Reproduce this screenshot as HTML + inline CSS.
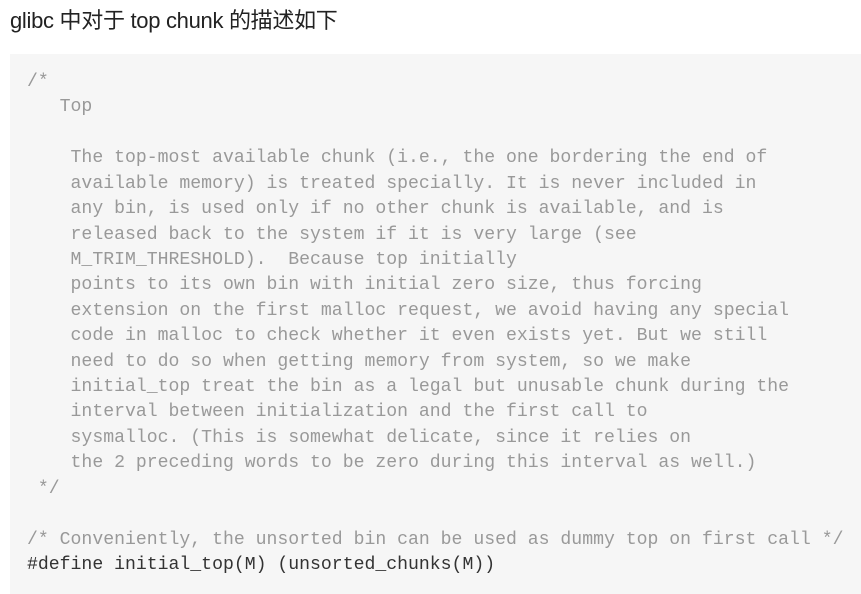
<!DOCTYPE html>
<html><head><meta charset="utf-8"><style>
body{margin:0;background:#fff;width:861px;height:583px;overflow:hidden;position:relative}
.t{position:absolute;left:10px;top:3px;font:22px "Liberation Sans","Noto Sans CJK SC",sans-serif;color:#222;letter-spacing:-0.3px}
.b{position:absolute;left:10px;top:54px;width:860px;height:540px;background:#f6f6f6}
pre{position:absolute;left:27px;top:70px;margin:0;font:18.15px/25.42px "Liberation Mono",monospace;color:#999}
.d{color:#333}
</style></head><body>
<div class="t">glibc 中对于 top chunk 的描述如下</div>
<div class="b"></div>
<pre>/*
   Top

    The top-most available chunk (i.e., the one bordering the end of
    available memory) is treated specially. It is never included in
    any bin, is used only if no other chunk is available, and is
    released back to the system if it is very large (see
    M_TRIM_THRESHOLD).  Because top initially
    points to its own bin with initial zero size, thus forcing
    extension on the first malloc request, we avoid having any special
    code in malloc to check whether it even exists yet. But we still
    need to do so when getting memory from system, so we make
    initial_top treat the bin as a legal but unusable chunk during the
    interval between initialization and the first call to
    sysmalloc. (This is somewhat delicate, since it relies on
    the 2 preceding words to be zero during this interval as well.)
 */

/* Conveniently, the unsorted bin can be used as dummy top on first call */
<span class="d">#define initial_top(M) (unsorted_chunks(M))</span></pre>
</body></html>
